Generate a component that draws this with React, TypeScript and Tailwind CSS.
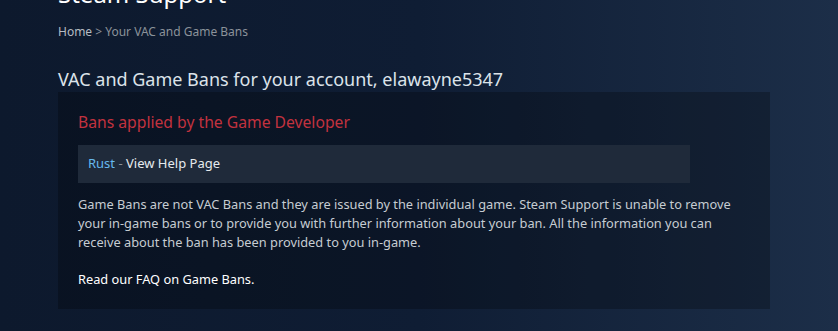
export default function App() {
  return (
    <div
      className="w-[838px] h-[331px] overflow-hidden flow-root bg-[linear-gradient(90deg,#0d192d_0%,#0f1d34_50%,#1c2e48_100%)]"
      style={{ fontFamily: '"Noto Sans", Arial, sans-serif' }}
    >
      <div className="pl-[58px] pr-[68px] flow-root">
        <div className="mt-[-20px] h-[28px] text-[24px] leading-[28px] text-white">Steam Support</div>
        <div className="mt-[14px] h-[20px] text-[12px] leading-[20px] text-[#8b929a]">
          <span className="text-[#b6bcc2]">Home</span> &gt; Your VAC and Game Bans
        </div>
        <div className="mt-[23px] h-[28px] text-[18px] leading-[28px] text-[#dce3ea]">
          VAC and Game Bans for your account, elawayne5347
        </div>
        <div className="mt-[-1px] h-[217px] bg-[#000000]/25 pl-[20px] pt-[19px]">
          <div className="h-[22px] text-[15.7px] leading-[22px] text-[#c2323f]">Bans applied by the Game Developer</div>
          <div className="mt-[12px] w-[612px] h-[38px] bg-[#1f2a3a] pl-[10px] flex items-center text-[13px]">
            <span className="text-[#66b8ee]">Rust</span>
            <span className="text-[#8b929a]">&nbsp;-&nbsp;</span>
            <span className="text-[#e6eaee]">View Help Page</span>
          </div>
          <div className="mt-[12px] w-[670px] text-[12.8px] leading-[19px] text-[#c6ccd2]">
            Game Bans are not VAC Bans and they are issued by the individual game. Steam Support is unable to remove
            your in-game bans or to provide you with further information about your ban. All the information you can
            receive about the ban has been provided to you in-game.
          </div>
          <div className="mt-[18px] text-[12.8px] leading-[19px] text-white">Read our FAQ on Game Bans.</div>
        </div>
      </div>
    </div>
  );
}
